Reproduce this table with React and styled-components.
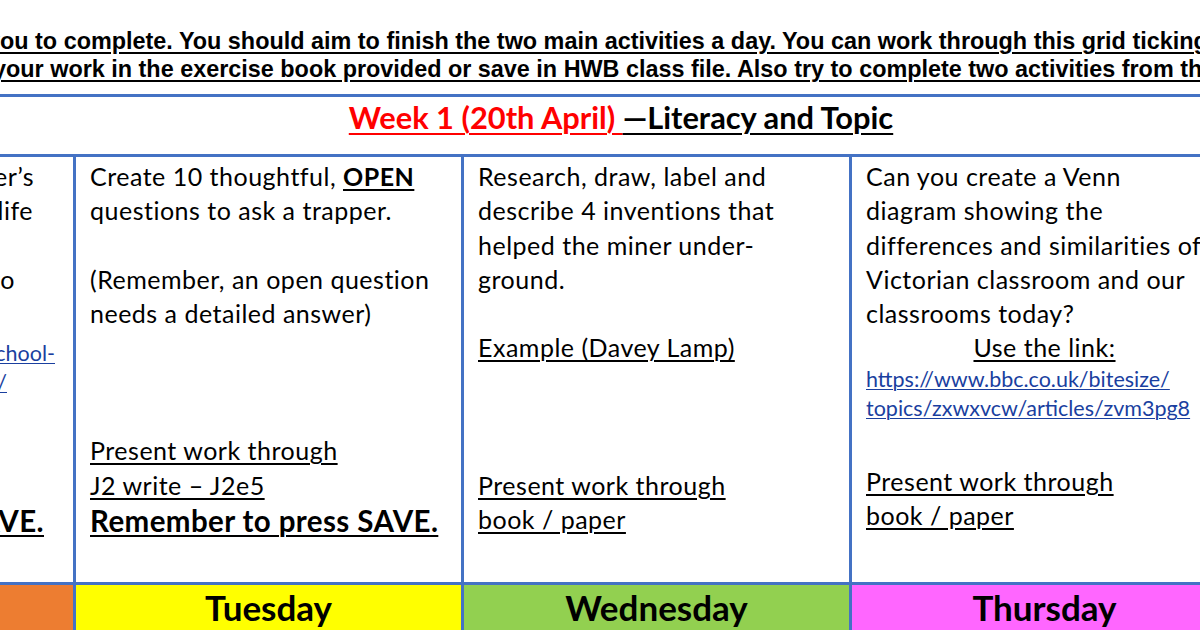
import React from "react";
import styled, { createGlobalStyle } from "styled-components";

const Global = createGlobalStyle`
  html, body { margin: 0; padding: 0; background: #fff; }
  body { font-family: Lato, "Liberation Sans", sans-serif; color: #000; }
`;

const BLUE = "#4472C4";
const ROW = 34.3;

const Page = styled.div`
  width: 1200px;
  height: 630px;
  overflow: hidden;
  background: #fff;
`;

const Intro = styled.div`
  padding-top: 27px;
  font-family: "Liberation Sans", Arial, sans-serif;
  font-weight: 700;
  font-size: 23.4px;
  line-height: 28px;
`;

const IntroLine = styled.div`
  white-space: nowrap;
  margin-left: ${(p) => p.$shift}px;
  text-decoration: underline;
  text-decoration-thickness: 2px;
  text-underline-offset: 3px;
`;

const Sheet = styled.div`
  display: grid;
  grid-template-columns: repeat(5, 385px);
  grid-template-rows: 57px 425px 60px;
  gap: 3px;
  padding: 3px;
  background: ${BLUE};
  margin: 11px 0 0 -315px;
  width: max-content;
`;

const TitleCell = styled.div`
  grid-column: 1 / -1;
  background: #fff;
  display: flex;
  justify-content: center;
  align-items: flex-start;
  padding: 3px 71px 0 0;
  font-weight: 700;
  font-size: 30.8px;
  line-height: 36px;
  white-space: pre;
`;

const Title = styled.div``;

const TitlePart = styled.span`
  color: ${(p) => p.$color};
  text-decoration: underline;
  text-decoration-thickness: 2px;
  text-underline-offset: 4px;
`;

const Cell = styled.div`
  background: #fff;
  padding: 2px 14px 0 14px;
  font-size: 25px;
  letter-spacing: 0.5px;
  line-height: ${ROW}px;
  white-space: nowrap;
  overflow: hidden;
  display: flex;
  flex-direction: column;
  align-items: ${(p) => (p.$end ? "flex-end" : "stretch")};
`;

const Line = styled.div`
  text-align: ${(p) => (p.$center ? "center" : "left")};
  padding-right: ${(p) => p.$inset || 0}px;
  text-decoration: ${(p) => (p.$u ? "underline" : "none")};
  text-decoration-thickness: 1.5px;
  text-underline-offset: 3px;
`;

const Blank = styled.div`
  height: ${(p) => p.$h || ROW}px;
  flex: none;
`;

const Strong = styled.span`
  font-weight: 700;
  text-decoration: underline;
  text-decoration-thickness: 2px;
  text-underline-offset: 3px;
`;

const BigLine = styled.div`
  font-size: 29.5px;
  letter-spacing: 0.4px;
  line-height: 37px;
  font-weight: 700;
  padding-right: ${(p) => p.$inset || 0}px;
  text-decoration: underline;
  text-decoration-thickness: 2px;
  text-underline-offset: 3px;
`;

const LinkLine = styled.a`
  display: block;
  font-size: 21.5px;
  letter-spacing: 0;
  line-height: 29px;
  color: #1a3f9f;
  text-decoration: underline;
  text-decoration-thickness: 1px;
  text-underline-offset: 2px;
  padding-right: ${(p) => p.$inset || 0}px;
`;

const DayCell = styled.div`
  background: ${(p) => p.$bg};
  display: flex;
  justify-content: center;
  padding-top: 1px;
  font-weight: 700;
  font-size: 35px;
  line-height: 42px;
`;

export default function App() {
  return (
    <Page>
      <Global />
      <Intro>
        <IntroLine $shift={-13}>
          you to complete. You should aim to finish the two main activities a day. You can work through this grid ticking off each one.
        </IntroLine>
        <IntroLine $shift={-7}>
          your work in the exercise book provided or save in HWB class file. Also try to complete two activities from the grid.
        </IntroLine>
      </Intro>
      <Sheet>
        <TitleCell>
          <Title>
            <TitlePart $color="#ff0000">Week 1 (20th April) </TitlePart>
            <TitlePart $color="#000">—Literacy and Topic</TitlePart>
          </Title>
        </TitleCell>

        <Cell $end>
          <Line $inset={25}>Imagine you are a chimney sweeper’s</Line>
          <Line $inset={26}>apprentice. Describe your daily life</Line>
          <Blank />
          <Line $inset={44}>Use the link below to</Line>
          <Blank $h={43} />
          <LinkLine $inset={4} href="#">https://www.bbc.co.uk/bitesize/school-</LinkLine>
          <LinkLine $inset={52} href="#">life/</LinkLine>
          <Blank $h={105} />
          <BigLine $inset={15}>Remember to press SAVE.</BigLine>
        </Cell>

        <Cell>
          <Line>
            Create 10 thoughtful, <Strong>OPEN</Strong>
          </Line>
          <Line>questions to ask a trapper.</Line>
          <Blank />
          <Line>(Remember, an open question</Line>
          <Line>needs a detailed answer)</Line>
          <Blank />
          <Blank />
          <Blank />
          <Line $u>Present work through</Line>
          <Line $u>J2 write – J2e5</Line>
          <BigLine>Remember to press SAVE.</BigLine>
        </Cell>

        <Cell>
          <Line>Research, draw, label and</Line>
          <Line>describe 4 inventions that</Line>
          <Line>helped the miner under-</Line>
          <Line>ground.</Line>
          <Blank />
          <Line $u>Example (Davey Lamp)</Line>
          <Blank />
          <Blank />
          <Blank />
          <Line $u>Present work through</Line>
          <Line $u>book / paper</Line>
        </Cell>

        <Cell>
          <Line>Can you create a Venn</Line>
          <Line>diagram showing the</Line>
          <Line>differences and similarities of</Line>
          <Line>Victorian classroom and our</Line>
          <Line>classrooms today?</Line>
          <Line $center $u>Use the link:</Line>
          <LinkLine href="#">https://www.bbc.co.uk/bitesize/</LinkLine>
          <LinkLine href="#">topics/zxwxvcw/articles/zvm3pg8</LinkLine>
          <Blank $h={41} />
          <Line $u>Present work through</Line>
          <Line $u>book / paper</Line>
        </Cell>

        <Cell>
          <Line>Write a short story about</Line>
        </Cell>

        <DayCell $bg="#ED7D31">Monday</DayCell>
        <DayCell $bg="#FFFF00">Tuesday</DayCell>
        <DayCell $bg="#92D050">Wednesday</DayCell>
        <DayCell $bg="#FF66FF">Thursday</DayCell>
        <DayCell $bg="#00B0F0">Friday</DayCell>
      </Sheet>
    </Page>
  );
}
